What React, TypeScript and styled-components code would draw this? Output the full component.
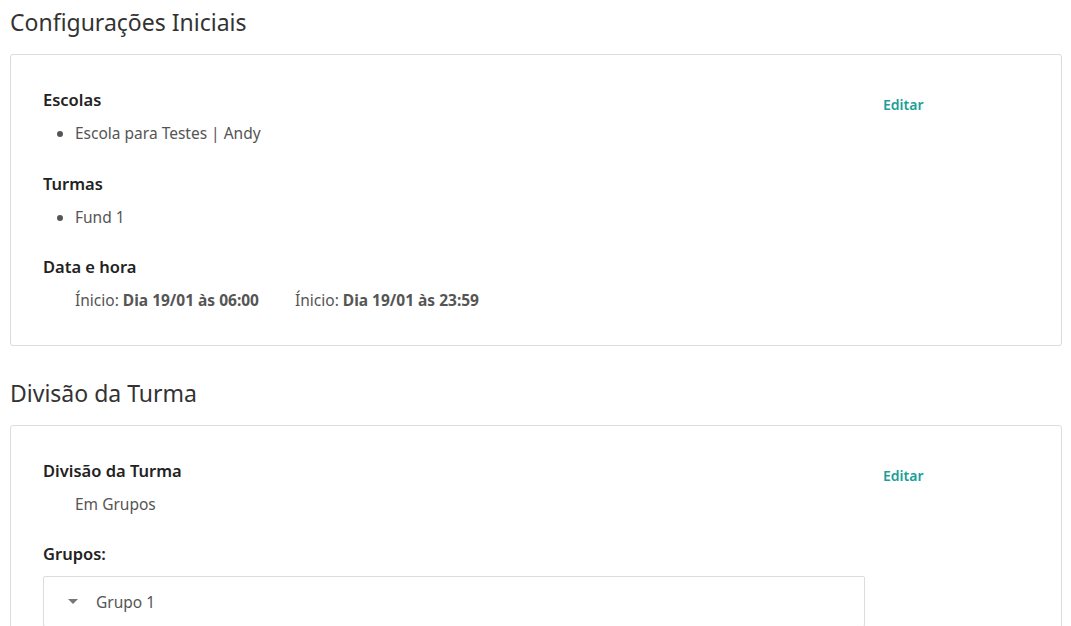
import styled, { createGlobalStyle } from 'styled-components';

const GlobalStyle = createGlobalStyle`
  body {
    margin: 0;
    background: #fff;
    font-family: 'Noto Sans', 'Open Sans', sans-serif;
    color: #333;
  }
`;

const Page = styled.div`
  padding: 0 9px 0 10px;
`;

const SectionTitle = styled.h2`
  margin: 0;
  height: 54px;
  padding-top: 7px;
  box-sizing: border-box;
  font-size: 23px;
  font-weight: 400;
  color: #333;
  line-height: 30px;
`;

const Card = styled.div`
  border: 1px solid #dcdcdc;
  border-radius: 3px;
  padding: 32px 32px 33px;
  display: grid;
  grid-template-columns: 822px 1fr;
  column-gap: 18px;
  margin-bottom: 25px;
`;

const Fields = styled.div`
  display: flex;
  flex-direction: column;
`;

const Label = styled.div<{ $gap?: number }>`
  font-size: 16.5px;
  font-weight: 600;
  color: #222;
  line-height: 25px;
  margin-top: ${(p) => p.$gap ?? 0}px;
`;

const List = styled.ul`
  margin: 9px 0 0;
  padding-left: 32px;
  color: #555;
  font-size: 15.5px;
  line-height: 24px;

  li::marker {
    color: #555;
  }
`;

const Value = styled.div`
  margin-top: 9px;
  padding-left: 32px;
  color: #555;
  font-size: 15.5px;
  line-height: 24px;
  display: flex;
  gap: 36px;

  b {
    font-weight: 700;
  }
`;

const EditLink = styled.a`
  font-size: 14px;
  font-weight: 600;
  color: #1a9e98;
  text-decoration: none;
  cursor: pointer;
  line-height: 20px;
  margin-top: 8px;
  justify-self: start;
`;

const Group = styled.div`
  margin-top: 10px;
  border: 1px solid #dcdcdc;
  border-radius: 2px;
  height: 49px;
  display: flex;
  align-items: center;
  padding-left: 24px;
  gap: 18px;
  color: #555;
  font-size: 15.5px;
`;

const Caret = styled.span`
  width: 0;
  height: 0;
  border-left: 5px solid transparent;
  border-right: 5px solid transparent;
  border-top: 5px solid #777;
`;

export default function App() {
  return (
    <Page>
      <GlobalStyle />
      <SectionTitle>Configurações Iniciais</SectionTitle>
      <Card>
        <Fields>
          <Label>Escolas</Label>
          <List>
            <li>Escola para Testes | Andy</li>
          </List>
          <Label $gap={26}>Turmas</Label>
          <List>
            <li>Fund 1</li>
          </List>
          <Label $gap={25}>Data e hora</Label>
          <Value>
            <span>
              Ínicio: <b>Dia 19/01 às 06:00</b>
            </span>
            <span>
              Ínicio: <b>Dia 19/01 às 23:59</b>
            </span>
          </Value>
        </Fields>
        <EditLink>Editar</EditLink>
      </Card>

      <SectionTitle>Divisão da Turma</SectionTitle>
      <Card>
        <Fields>
          <Label>Divisão da Turma</Label>
          <Value>Em Grupos</Value>
          <Label $gap={25}>Grupos:</Label>
          <Group>
            <Caret />
            Grupo 1
          </Group>
        </Fields>
        <EditLink>Editar</EditLink>
      </Card>
    </Page>
  );
}
